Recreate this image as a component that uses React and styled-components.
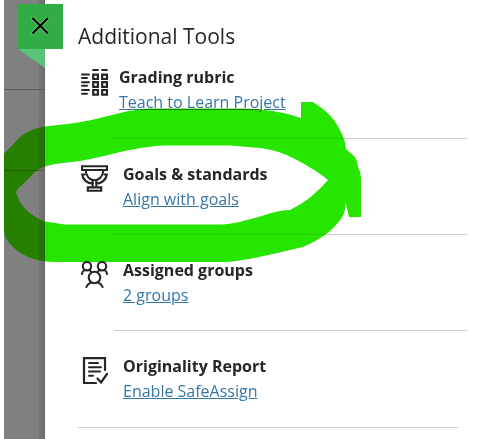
import React from 'react';
import styled, { createGlobalStyle } from 'styled-components';

const tools = [
  {
    id: 'rubric',
    title: 'Grading rubric',
    link: 'Teach to Learn Project',
    icon: RubricIcon,
    compact: true,
  },
  {
    id: 'goals',
    title: 'Goals & standards',
    link: 'Align with goals',
    icon: TrophyIcon,
  },
  {
    id: 'groups',
    title: 'Assigned groups',
    link: '2 groups',
    icon: GroupsIcon,
  },
  {
    id: 'originality',
    title: 'Originality Report',
    link: 'Enable SafeAssign',
    icon: ReportIcon,
    last: true,
  },
];

function App() {
  return (
    <StyledPage>
      <GlobalStyle />
      <StyledBackdrop>
        <StyledBackdropRow $height={90} />
        <StyledBackdropRow $height={81} />
      </StyledBackdrop>
      <StyledPanel>
        <StyledHeading>Additional Tools</StyledHeading>
        <StyledToolList>
          {tools.map(({ id, title, link, icon: Icon, compact, last }) => (
            <StyledTool key={id}>
              <StyledIconBox $compact={compact}>
                <Icon />
              </StyledIconBox>
              <StyledToolBody $compact={compact} $last={last}>
                <StyledToolTitle>{title}</StyledToolTitle>
                <StyledToolLink href={`#${id}`}>{link}</StyledToolLink>
              </StyledToolBody>
            </StyledTool>
          ))}
        </StyledToolList>
        <StyledPanelEnd />
      </StyledPanel>
      <StyledClose type="button" aria-label="Close">
        <CloseIcon />
      </StyledClose>
      <StyledFold viewBox="0 0 27 19" aria-hidden="true">
        <path d="M0 0H27V19Z" fill="#5ac377" />
      </StyledFold>
      <Highlight />
    </StyledPage>
  );
}

export default App;

function CloseIcon() {
  return (
    <svg width="19" height="19" viewBox="0 0 19 19" fill="none" strokeLinecap="round">
      <path d="M2 1.500L16.500 16M16.500 1.500L2 16" stroke="#7fd492" strokeWidth="4" opacity="0.5" />
      <path d="M2 1.500L16.500 16M16.500 1.500L2 16" stroke="#000" strokeWidth="2" />
    </svg>
  );
}

function RubricIcon() {
  return (
    <svg width="27" height="27" viewBox="0 0 27 27" fill="none" stroke="#262626" strokeWidth="2.2">
      <path d="M12 1H17M21 1H26" strokeLinecap="round" strokeWidth="1.8" />
      <path d="M12.2 5.600H16.900V10H12.200ZM21.200 5.600H25.900V10H21.200ZM12.200 13.200H16.900V17.800H12.200ZM21.200 13.200H25.900V17.800H21.200ZM12.200 21H16.900V25.600H12.200ZM21.200 21H25.900V25.600H21.200Z" />
      <path
        d="M1 5.500H8M1 9H6M1 13.300H8M1 16.800H6M1 21H8M1 24.700H6"
        strokeLinecap="round"
        strokeWidth="2"
      />
    </svg>
  );
}

function TrophyIcon() {
  return (
    <svg width="27" height="27" viewBox="0 0 27 27" fill="none" stroke="#262626" strokeWidth="2.1">
      <path d="M1 1.200H26V5H1Z" />
      <path d="M4.600 5C5 11 8.500 15.200 13.500 15.200S22 11 22.400 5" />
      <path d="M4.500 9.500H1.200C1.800 14.500 6 18.400 11.600 18.600V22M22.500 9.500H25.800C25.200 14.500 21 18.400 15.400 18.600V22" />
      <path d="M11.600 15.200V19M15.400 15.200V19" />
      <path d="M6.800 22.400H20.200V25.800H6.800Z" />
    </svg>
  );
}

function GroupsIcon() {
  return (
    <svg
      width="27"
      height="27"
      viewBox="0 0 27 27"
      fill="none"
      stroke="#262626"
      strokeWidth="2.1"
      strokeLinecap="round"
    >
      <circle cx="6" cy="5.200" r="4.200" />
      <circle cx="21" cy="5.200" r="4.200" />
      <circle cx="13.500" cy="16.500" r="5.800" />
      <path d="M1 13C1.200 11 2.200 9.600 3.600 8.800M8.400 8.800L9.800 10.200M26 13C25.800 11 24.800 9.600 23.400 8.800M18.600 8.800L17.200 10.200" />
      <path d="M5.400 26C6.200 23.800 7.800 22.300 10 21.500M21.600 26C20.800 23.800 19.200 22.300 17 21.500" />
    </svg>
  );
}

function ReportIcon() {
  return (
    <svg
      width="27"
      height="27"
      viewBox="0 0 27 27"
      fill="none"
      stroke="#262626"
      strokeWidth="2.2"
      strokeLinecap="round"
    >
      <path d="M15 26H3V1.200H24V13" />
      <path d="M8 6H17M8 10.200H20M8 14.400H19M8 18.800H12" strokeWidth="2" />
      <path d="M16.500 21.500L20 25.500L26 17" />
    </svg>
  );
}

function Highlight() {
  return (
    <StyledHighlight width="362" height="263" viewBox="0 0 362 263" aria-hidden="true">
      <path
        fill="#26e600"
        fillRule="evenodd"
        d="M4 154L20 137Q29 129 45 126.500L71 123.500Q85 122 120 113Q139 108.500 150 108.500H242Q277 109 301 118V102H313Q326 110 334 120Q346 138 346 149L354 156Q357 159 358 167Q361 172 361 178V217H349L345.500 202Q346 211 342 217Q331 235 303 247L290 250Q240 262 225 262H55Q30 262 14 248Q4 239 4 230Z
          M16 192Q17 189 20 187L34 173Q39 167 55 164L80 161Q97 158 120 152Q150 145.500 165 145.500H230L260 148Q278 150 295 159Q316 170 328 180Q311 200 290 210Q280 210 265 215Q235 224 222 224.500H65L45 221.500Q21 212 16 192Z"
      />
    </StyledHighlight>
  );
}

const GlobalStyle = createGlobalStyle`
  * {
    box-sizing: border-box;
  }

  body {
    margin: 0;
    background: #fff;
    color: #262626;
    font-family: 'Open Sans', 'Noto Sans', sans-serif;
    font-size: 16px;
  }
`;

const StyledPage = styled.div`
  position: relative;
  display: flex;
  min-height: 100vh;
  padding-left: 4px;
  background: #fff;
  overflow: hidden;
`;

const StyledBackdrop = styled.div`
  flex: 0 0 41px;
  background: linear-gradient(to right, #808080 35px, #747474 35px, #707070 40px, #666 40px);
`;

const StyledBackdropRow = styled.div`
  height: ${({ $height }) => $height}px;
  border-bottom: 1px solid #5c5c5c;
`;

const StyledPanel = styled.main`
  flex: 1;
  padding: 20px 24px 0 33px;
`;

const StyledHeading = styled.h1`
  margin: 0;
  font-size: 21px;
  font-weight: 500;
  line-height: 32px;
`;

const StyledToolList = styled.ul`
  margin: 0;
  padding: 0;
  list-style: none;
`;

const StyledTool = styled.li`
  display: flex;
`;

const StyledIconBox = styled.div`
  flex: 0 0 36px;
  padding: ${({ $compact }) => ($compact ? 17 : 26)}px 0 0 3px;

  svg {
    display: block;
  }
`;

const StyledToolBody = styled.div`
  flex: 1;
  display: flex;
  flex-direction: column;
  align-items: flex-start;
  padding: ${({ $compact }) => ($compact ? '13px 0 23px 5px' : '23px 0 22px 9px')};
  border-bottom: 1px solid ${({ $last }) => ($last ? 'transparent' : '#ccc')};
`;

const StyledToolTitle = styled.h2`
  margin: 0;
  font-size: 16px;
  font-weight: 700;
  line-height: 25px;
`;

const StyledToolLink = styled.a`
  color: #3577a8;
  line-height: 25px;
  text-decoration: underline;
`;

const StyledPanelEnd = styled.hr`
  margin: 0 9px 0 0;
  border: 0;
  border-top: 1px solid #ccc;
`;

const StyledClose = styled.button`
  position: absolute;
  top: 4px;
  left: 18px;
  display: flex;
  align-items: center;
  justify-content: center;
  width: 45px;
  height: 45px;
  padding: 0;
  border: 0;
  background: #32ad46;
  cursor: pointer;
`;

const StyledFold = styled.svg`
  position: absolute;
  top: 49px;
  left: 18px;
  width: 27px;
  height: 19px;
`;

const StyledHighlight = styled.svg`
  position: absolute;
  top: 0;
  left: 0;
  mix-blend-mode: darken;
  pointer-events: none;
`;
